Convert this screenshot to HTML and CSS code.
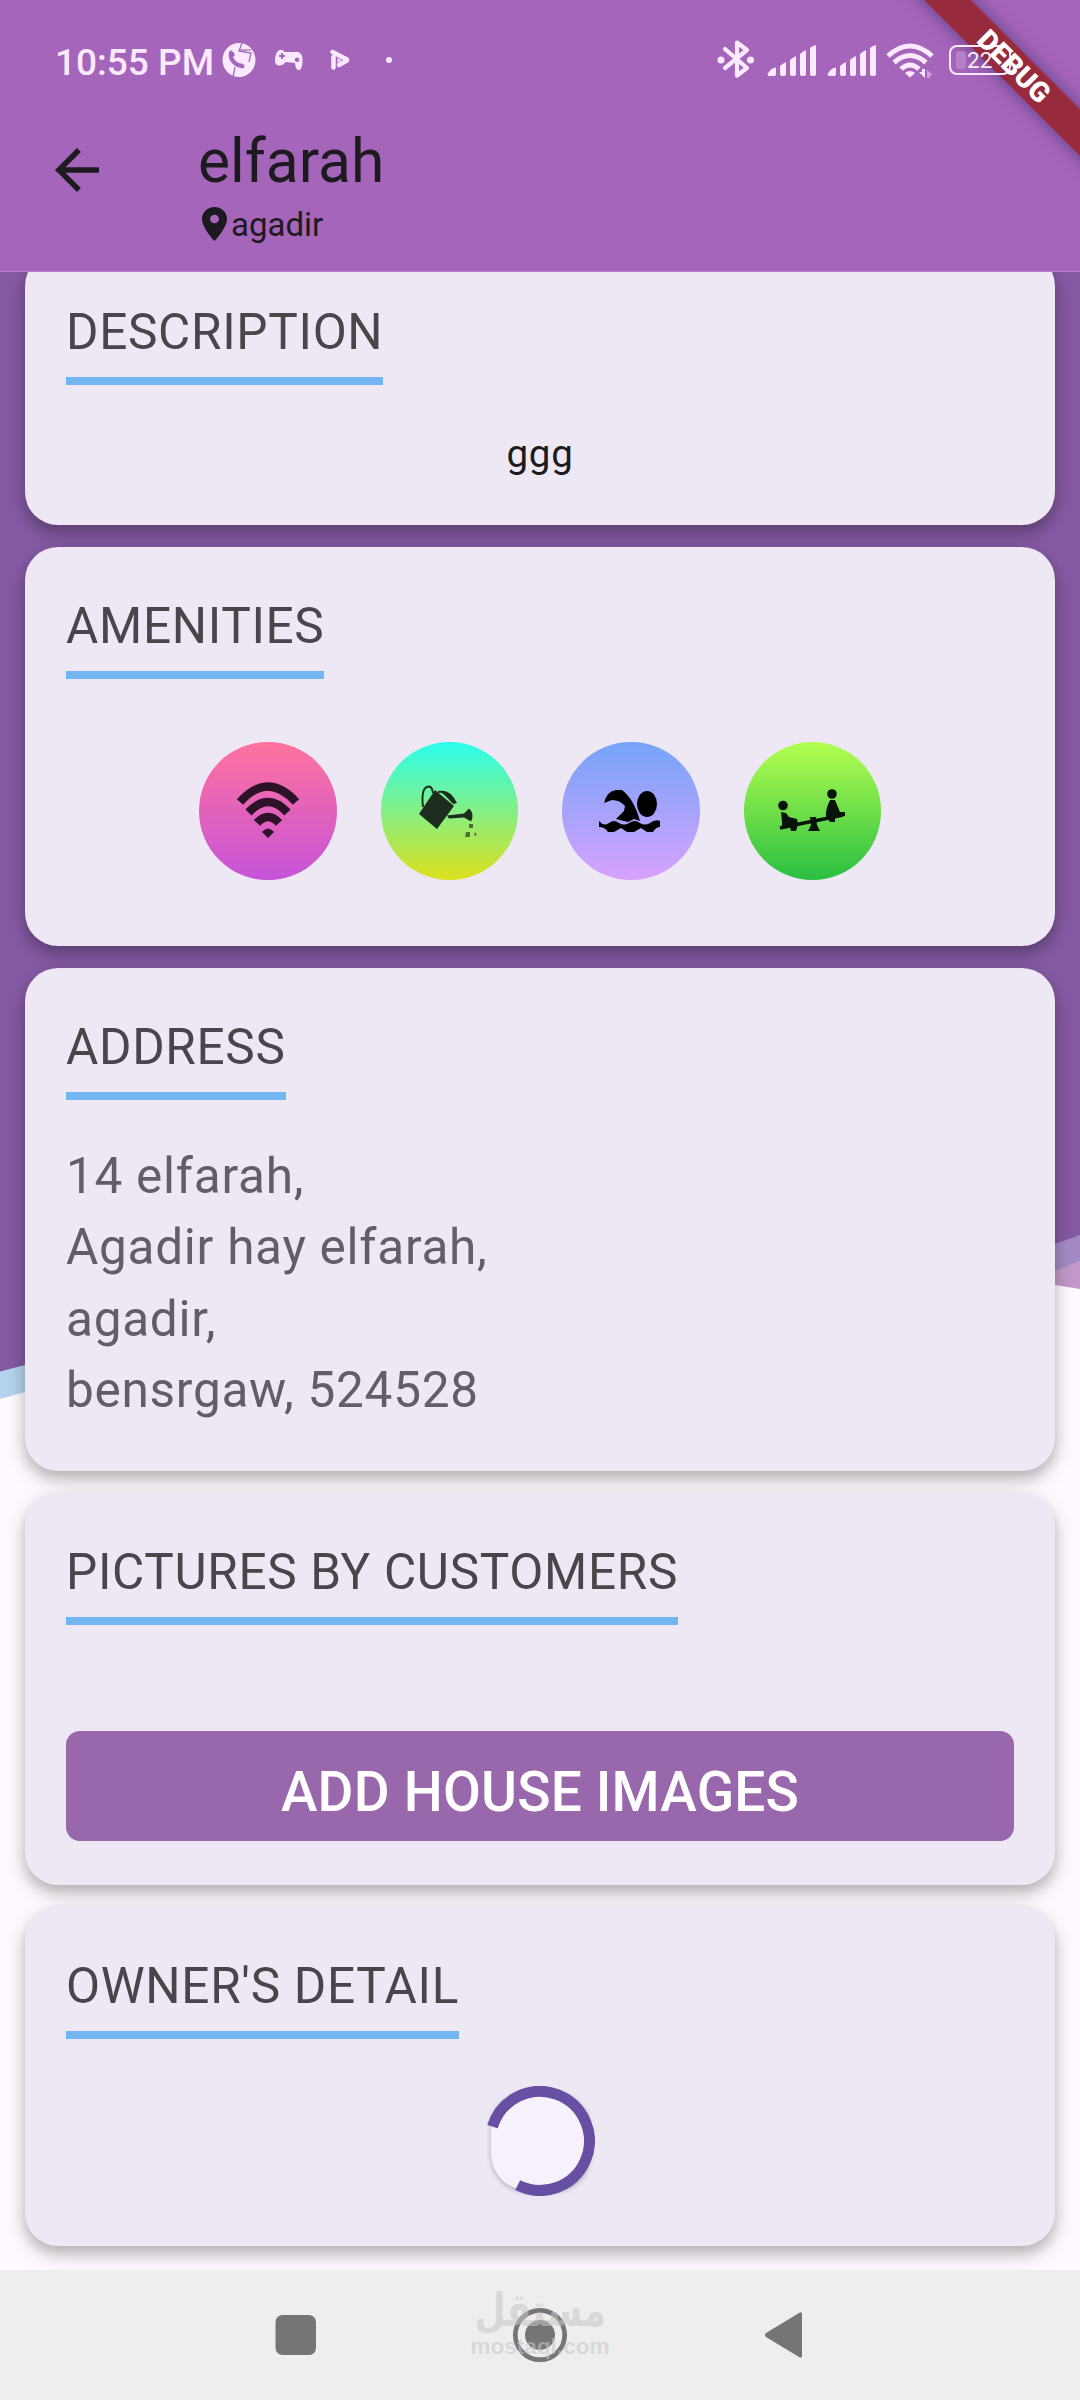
FILE: index.html
```html
<!DOCTYPE html>
<html lang="en">
<head>
<meta charset="utf-8">
<title>elfarah</title>
<link rel="stylesheet" href="styles.css">
</head>
<body>
<div class="phone">
  <header class="top">
    <div class="status">
      <span class="time">10:55 PM</span>
      <svg class="notes" width="174" height="40" viewBox="0 0 174 40" fill="#fbeaff">
        <ellipse cx="17" cy="20" rx="16.5" ry="17"/>
        <g fill="none" stroke="#a565ba"><path d="M20 3l-3 8 12 2-2 9M11 37l2-10" stroke-width="1.3"/><path d="M17 10h12" stroke-width="1.2"/></g>
        <path d="M7 12c2-3 4-1 6 3l-2 2c2 4 4 5 6 6l4 1c3 3 1 5-2 4C11 27 5 19 7 12z" fill="#a565ba"/>
        <path fill-rule="evenodd" d="M57 10q3-1 6 2h9q3-1 6 1 3 2 2.500 10-1 8-4.500 7-2.500-1-3-7l-9-1q-5 5-9 3-3-2-1.500-9 1-4 3.500-6zM59 13v2h-2v2h2v2h2v-2h2v-2h-2v-2zM75 17.500a2.300 2.300 0 1 0 .1 0z"/>
        <path d="M110.500 12L125 19.500M111.500 17v10.500M117 25l8-4.500" stroke="#fbeaff" stroke-width="4.500" stroke-linecap="round"/><path d="M115.500 18l4 2-4 3z"/>
        <circle cx="167" cy="20" r="3"/>
      </svg>
      <svg class="signals" width="300" height="44" viewBox="0 0 300 44" fill="#fbeaff">
        <g transform="translate(-16 -2)">
          <path d="M25 13l22 19-10 7.500V6.500L47 14 25 32" fill="none" stroke="#fbeaff" stroke-width="4.200" stroke-linejoin="round" stroke-linecap="round"/>
          <circle cx="21" cy="24" r="3.500"/><circle cx="50.500" cy="24" r="3.500"/>
          <path id="bars" d="M69 36q2-4 7-4.500V38q0 2-1.500 2h-5q-2 0-2-2zM80 30q2-2 6-4v12q0 2-2 2h-2q-2 0-2-2zM90 24q2-2 6-4v18q0 2-2 2h-2q-2 0-2-2zM100 18q2-2 6-4v24q0 2-2 2h-2q-2 0-2-2zM110 12q2-2 6-3v29q0 2-2 2h-2q-2 0-2-2z"/>
          <use href="#bars" x="60"/>
          <g fill="none" stroke="#fbeaff" stroke-width="5"><path d="M188 20q22-20 44 0M194 26.500q16-14 32 0M201 33q9-8 18 0"/></g>
          <path d="M205 37q5-4 10 0l-5 4.500zM219 36h3v-3h3v9z"/><path d="M227 42v-8l6 5h-3v3z" opacity=".45"/>
        </g>
      </svg>
    </div>
    <div class="bar">
      <svg class="back" width="66" height="66" viewBox="0 0 24 24" fill="#1d1b20"><path d="M20 11H7.830l5.590-5.590L12 4l-8 8 8 8 1.410-1.410L7.830 13H20v-2z"/></svg>
      <div class="titles">
        <h1>elfarah</h1>
        <div class="place"><svg width="25" height="34" viewBox="5 2 14 20" preserveAspectRatio="none" fill="#1c1a20"><path d="M12 2C8.130 2 5 5.130 5 9c0 5.250 7 13 7 13s7-7.750 7-13c0-3.870-3.130-7-7-7zm0 9.500a2.500 2.500 0 1 1 0-5 2.500 2.500 0 0 1 0 5z"/></svg><span>agadir</span></div>
      </div>
    </div>
    <div class="ribbon"></div>
    <div class="battery"><i></i><span>22</span></div>
    <div class="debug">DEBUG</div>
  </header>

  <main class="content">
    <svg class="backdrop" width="1080" height="1998" viewBox="0 272 1080 1998">
      <path d="M0 272h1080v990L540 1464 0 1399z" fill="#fffaff"/>
      <path d="M0 272h700v925L25 1392 0 1399z" fill="#b5d3ee"/>
      <path d="M1080 1289l-300-48V272h300z" fill="#c299ca"/>
      <path d="M1080 1261l-540 210V272h540z" fill="#a48bc5"/>
      <path d="M540 1285h515v180H540z" fill="#fffaff"/>
      <path d="M0 272h1080v963l-25 9-515 0-515 121-25 6.500z" fill="#855aa4"/>
    </svg>

    <section class="card description">
      <h2>DESCRIPTION</h2>
      <p class="note">ggg</p>
    </section>

    <section class="card amenities">
      <h2>AMENITIES</h2>
      <div class="round-row">
        <div class="round wifi"><svg width="138" height="138" viewBox="0 0 138 138"><g fill="none" stroke="#2e1228" stroke-width="8.500"><path d="M41 60q28-31 56 0M49.500 70.500q19.500-21 39 0M58 81q11-12 22 0"/></g><path d="M63 90q6-7 12 0l-6 6z" fill="#2e1228"/></svg></div>
        <div class="round garden"><svg width="138" height="138" viewBox="0 0 138 138" fill="#1c2d1d"><path d="M54 48l19 16-17 23-18-15z"/><path d="M42 65q-2-18 4-20 5-2 6 6M57 50q9-2 17 11" fill="none" stroke="#1c2d1d" stroke-width="2"/><path d="M59 49q10-2 17 12l-4 1q-5-6-13-13z"/><path d="M66 73.500l17-2 5-5q6 5 2 13l-7-4-15 1z"/><path d="M88 82h4v4h-4zM85 90h4v5h-5zM94 90l2 3-3 1z" opacity=".65"/></svg></div>
        <div class="round pool"><svg width="138" height="138" viewBox="0 0 138 138"><ellipse cx="85" cy="62" rx="10" ry="13"/><path d="M42 61q3-12 12-13h6q12 9 18 31l-6-2-6 3-12-3 8-8 1-5q-5-6-13-6l-8 3z"/><path d="M37 79q5 6 10 2 5-4 10 0 5 3 10 0 6-4 11 0 5 3 10 0 5-4 10-2v6q-4 0-7 5h-6l-6-4-7 4h-7l-6-4-7 4h-6q-3-5-9-5z"/></svg></div>
        <div class="round play"><svg width="138" height="138" viewBox="0 0 138 138" fill="#07140a"><circle cx="39" cy="63.500" r="4.800"/><circle cx="88" cy="52" r="4.800"/><path d="M37 70l5 1 3 4 8 2 1 5-2 7h-5l-1-4-8 2V80z"/><path d="M86 58h5l5 12h5v4h-6l-4 2v4h-5l-4-5q-1-7 4-17z"/><path d="M36 86l24-5 25-5 14-3" fill="none" stroke="#07140a" stroke-width="3.500"/><path d="M66 75h6l1 8 3 6H64l3-6z"/></svg></div>
      </div>
    </section>

    <section class="card address">
      <h2>ADDRESS</h2>
      <p class="lines">14 elfarah,<br>Agadir hay elfarah,<br>agadir,<br>bensrgaw, 524528</p>
    </section>

    <section class="card pictures">
      <h2>PICTURES BY CUSTOMERS</h2>
      <button class="add" type="button">ADD HOUSE IMAGES</button>
    </section>

    <section class="card owner">
      <h2>OWNER'S DETAIL</h2>
      <div class="loader"><svg width="110" height="110" viewBox="-55 -55 110 110"><path d="M-47.500-14.300A49.500 49.500 0 1 1-22.300 44.200" fill="none" stroke="#674fa3" stroke-width="11"/></svg></div>
    </section>
  </main>

  <nav class="nav">
    <svg class="keys" width="540" height="60" viewBox="270 2305 540 60" fill="#757575">
      <rect x="275.500" y="2315" width="40.500" height="40" rx="7"/>
      <circle cx="540" cy="2335" r="24.700" fill="none" stroke="#757575" stroke-width="4.700"/><circle cx="540" cy="2335" r="15"/>
      <path d="M766 2333l33-20q3-2 3 1v42q0 3-3 1l-33-20q-2-2 0-4z"/>
    </svg>
    <div class="mark"><span class="ar" lang="ar">مستقل</span><span class="en">mostaql.com</span></div>
  </nav>
</div>
</body>
</html>
```
FILE: styles.css
```css
* { box-sizing: border-box; }
body { margin: 0; font-family: Roboto, sans-serif; color: #1d1b20; }
h1, h2, p { margin: 0; font-weight: 400; }
svg { display: block; flex: none; }
.phone { width: 1080px; height: 2400px; display: flex; flex-direction: column; overflow: hidden; background: #fffaff; }

.top { position: relative; z-index: 2; height: 272px; flex: none; overflow: hidden; background: #a565ba; border-bottom: 1px solid #b97ccb; }
.status { display: flex; align-items: center; height: 120px; padding-left: 55px; }
.time { width: 167px; padding-top: 4px; font-size: 37px; font-weight: 500; color: #fbeaff; white-space: nowrap; }
.signals { margin-left: 320px; }
.bar { display: flex; padding-left: 44px; }
.back { margin-top: 17px; }
.titles { margin-left: 88px; padding-top: 4px; }
h1 { font-size: 60.5px; line-height: 76px; }
.place { display: flex; align-items: center; gap: 4px; height: 48px; padding-left: 4px; font-size: 33px; }

.ribbon, .debug { position: absolute; left: 914px; top: 49.500px; width: 200px; height: 33px; transform: rotate(45deg); }
.ribbon { width: 300px; left: 864px; background: #982a3e; box-shadow: 0 0 17px rgba(30, 30, 80, .55); }
.debug { color: #fff; font-size: 28px; font-weight: 900; line-height: 33px; text-align: center; }
.battery { position: absolute; left: 949px; top: 45px; width: 62px; height: 30px; border: 2.500px solid #fbeaff; border-radius: 8px; }
.battery i { position: absolute; left: 5px; top: 4px; width: 10px; height: 18px; border-radius: 3px; background: #b67fca; }
.battery span { position: absolute; left: 16px; top: 0; color: #fbeaff; font-size: 22.500px; line-height: 27px; }

.content { position: relative; height: 1998px; flex: none; padding: 0 24.750px; display: flex; flex-direction: column; gap: 22px; overflow: hidden; }
.backdrop { position: absolute; left: 0; top: 0; }
.card { position: relative; flex: none; padding: 44px 41.250px 0; border-radius: 33px; background: #ede8f4; box-shadow: 0 8px 22px rgba(0, 0, 0, .2), 0 7px 12px rgba(0, 0, 0, .14); display: flex; flex-direction: column; align-items: flex-start; }
.description { height: 272px; margin-top: -19px; }
.amenities { height: 398.500px; }
.address { height: 503.500px; }
.pictures { height: 392px; }
.owner { height: 338.500px; }
h2 { height: 88px; border-bottom: 8.250px solid #73b5f1; font-size: 49.500px; line-height: 70px; letter-spacing: .69px; color: #49454b; white-space: nowrap; }
.note { align-self: center; margin-top: 45px; font-size: 38.500px; line-height: 48px; letter-spacing: .7px; }
.round-row { align-self: center; display: flex; gap: 44px; margin-top: 63px; }
.round { width: 137.500px; height: 137.500px; border-radius: 50%; }
.wifi { background: linear-gradient(#ff729e, #c653d8); }
.garden { background: linear-gradient(#2bfeee, #dde01c); }
.pool { background: linear-gradient(#75a4f8, #d7a2ff); }
.play { background: linear-gradient(#b3ff50, #2bbe42); }
.lines { margin-top: 41px; font-size: 49.500px; line-height: 71.500px; letter-spacing: .73px; color: #625d66; }
.add { align-self: stretch; height: 110px; margin-top: 106px; padding: 11px 0 0; border: 0; border-radius: 14px; background: #9867ac; color: #fff; font: 500 55px Roboto, sans-serif; letter-spacing: .2px; }
.loader { align-self: center; margin-top: 52px; width: 99px; height: 99px; border-radius: 36px; background: #f6f1fa; box-shadow: 0 2px 5px rgba(0, 0, 0, .25); display: flex; align-items: center; justify-content: center; }

.nav { position: relative; z-index: 2; flex: 1; background: #eee; }
.keys { margin: 35px auto 0; }
.mark { position: absolute; left: 475px; top: 17px; width: 130px; display: flex; flex-direction: column; align-items: center; color: #c7c7c7; opacity: .55; white-space: nowrap; }
.ar { font: 700 46px/46px "DejaVu Sans", sans-serif; transform: scaleX(.78); }
.en { font: 700 22.500px/24px "Liberation Sans", sans-serif; margin-top: 2px; }
```
